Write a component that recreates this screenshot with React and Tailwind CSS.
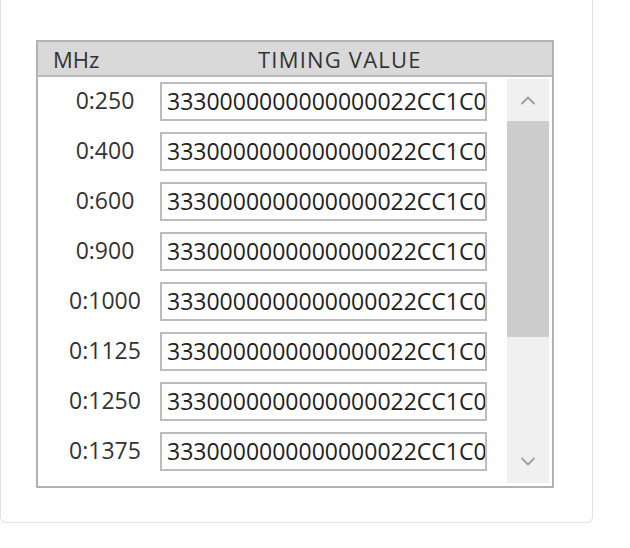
import React from 'react';

const rows = ['0:250', '0:400', '0:600', '0:900', '0:1000', '0:1125', '0:1250', '0:1375'];
const VALUE = '3330000000000000022CC1C000000000000000';

const Chevron = ({ up }) => (
    <svg width="16" height="10" viewBox="0 0 16 10" fill="none">
        <path
            d={up ? 'M2 8.5 L8 2.5 L14 8.5' : 'M2 1.5 L8 7.5 L14 1.5'}
            stroke="#9e9e9e"
            strokeWidth="1.8"
            strokeLinecap="round"
            strokeLinejoin="round"
        />
    </svg>
);

export default function App() {
    return (
        <div className="w-[630px] h-[548px] bg-white overflow-hidden" style={{ fontFamily: '"Open Sans", "Noto Sans", sans-serif' }}>
            {/* outer panel, top edge is off screen */}
            <div className="w-[593px] h-[523px] border-x border-b border-[#e2e2e2] rounded-b-md pt-[40px] pl-[35px]">
                <div className="w-[518px] h-[448px] border-2 border-[#b2b2b2] flex flex-col">
                    {/* header */}
                    <div className="h-[35px] shrink-0 bg-[#d9d9d9] border-b-2 border-[#b8b8b8] flex items-center text-[22px] text-[#333] leading-none">
                        <span className="pl-[15px] w-[200px]">MHz</span>
                        <span className="pl-[20px] tracking-[1.2px]">TIMING VALUE</span>
                    </div>
                    {/* body */}
                    <div className="flex flex-1 min-h-0">
                        <div className="flex-1 flex flex-col gap-[11px] pt-[5px] pl-[12px]">
                            {rows.map((r) => (
                                <div key={r} className="flex items-center h-[39px]">
                                    <span className="w-[110px] text-center text-[23px] text-[#333] leading-none pb-[3px]">{r}</span>
                                    <div className="w-[327px] h-[39px] border-2 border-[#bcbcbc] bg-white overflow-hidden px-[5px] flex items-center text-[23px] text-[#222] leading-none whitespace-nowrap">
                                        {VALUE}
                                    </div>
                                </div>
                            ))}
                        </div>
                        {/* scrollbar */}
                        <div className="w-[42px] mt-[2px] mb-[3px] mr-[3px] bg-[#f0f0f0] flex flex-col items-center">
                            <div className="h-[42px] flex items-center justify-center">
                                <Chevron up />
                            </div>
                            <div className="w-full h-[216px] bg-[#cdcdcd]" />
                            <div className="flex-1" />
                            <div className="h-[42px] flex items-center justify-center">
                                <Chevron />
                            </div>
                        </div>
                    </div>
                </div>
            </div>
        </div>
    );
}
